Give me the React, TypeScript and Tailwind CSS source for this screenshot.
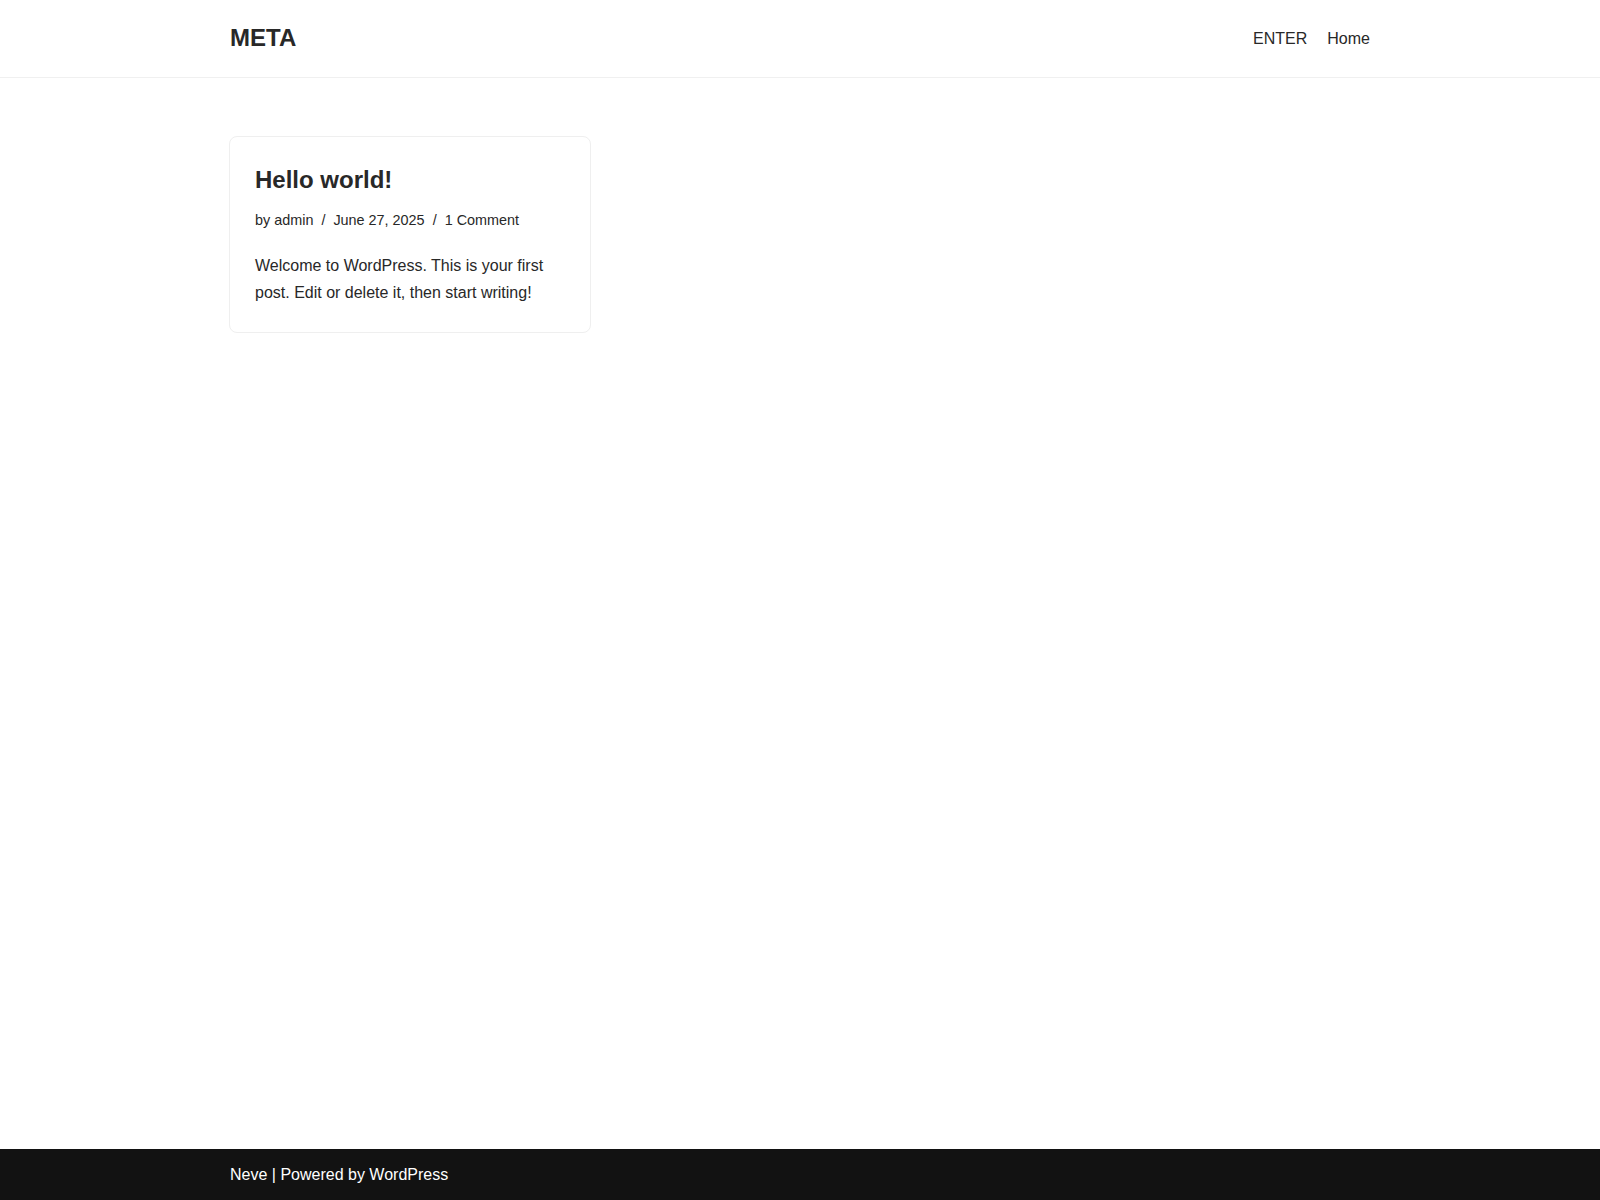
export default function App() {
  return (
    <div className="min-h-screen flex flex-col bg-white text-[#282828] font-['Liberation_Sans',Arial,sans-serif]">
      {/* Header */}
      <header className="h-[78px] border-b border-[#f0f0f0]">
        <div className="max-w-[1170px] mx-auto px-[15px] h-full flex items-center justify-between">
          <a href="#" className="text-[24px] font-bold leading-[1.2]">META</a>
          <nav className="flex items-center gap-[20px] text-[16px] pt-px">
            <a href="#">ENTER</a>
            <a href="#">Home</a>
          </nav>
        </div>
      </header>

      {/* Posts */}
      <main className="flex-1">
        <div className="max-w-[1170px] mx-auto px-[15px] pt-[58px]">
          <article className="w-[362px] -ml-px border border-[#efefef] rounded-lg pt-[27px] pl-[25px] pr-6 pb-[25px]">
            <h2 className="text-[24px] font-bold leading-[1.3]">
              <a href="#">Hello world!</a>
            </h2>
            <div className="mt-[14px] text-[14.4px] leading-[1.6] flex items-center">
              <span>by <a href="#">admin</a></span>
              <span className="px-[8px]">/</span>
              <span>June 27, 2025</span>
              <span className="px-[8px]">/</span>
              <a href="#">1 Comment</a>
            </div>
            <p className="mt-5 text-[16px] leading-[1.7]">
              Welcome to WordPress. This is your first post. Edit or delete it, then start writing!
            </p>
          </article>
        </div>
      </main>

      {/* Footer */}
      <footer className="h-[51px] bg-[#121212] text-white">
        <div className="max-w-[1170px] mx-auto px-[15px] h-full flex items-center text-[16px] leading-6">
          <p>
            <a href="#">Neve</a> | Powered by <a href="#">WordPress</a>
          </p>
        </div>
      </footer>
    </div>
  );
}
